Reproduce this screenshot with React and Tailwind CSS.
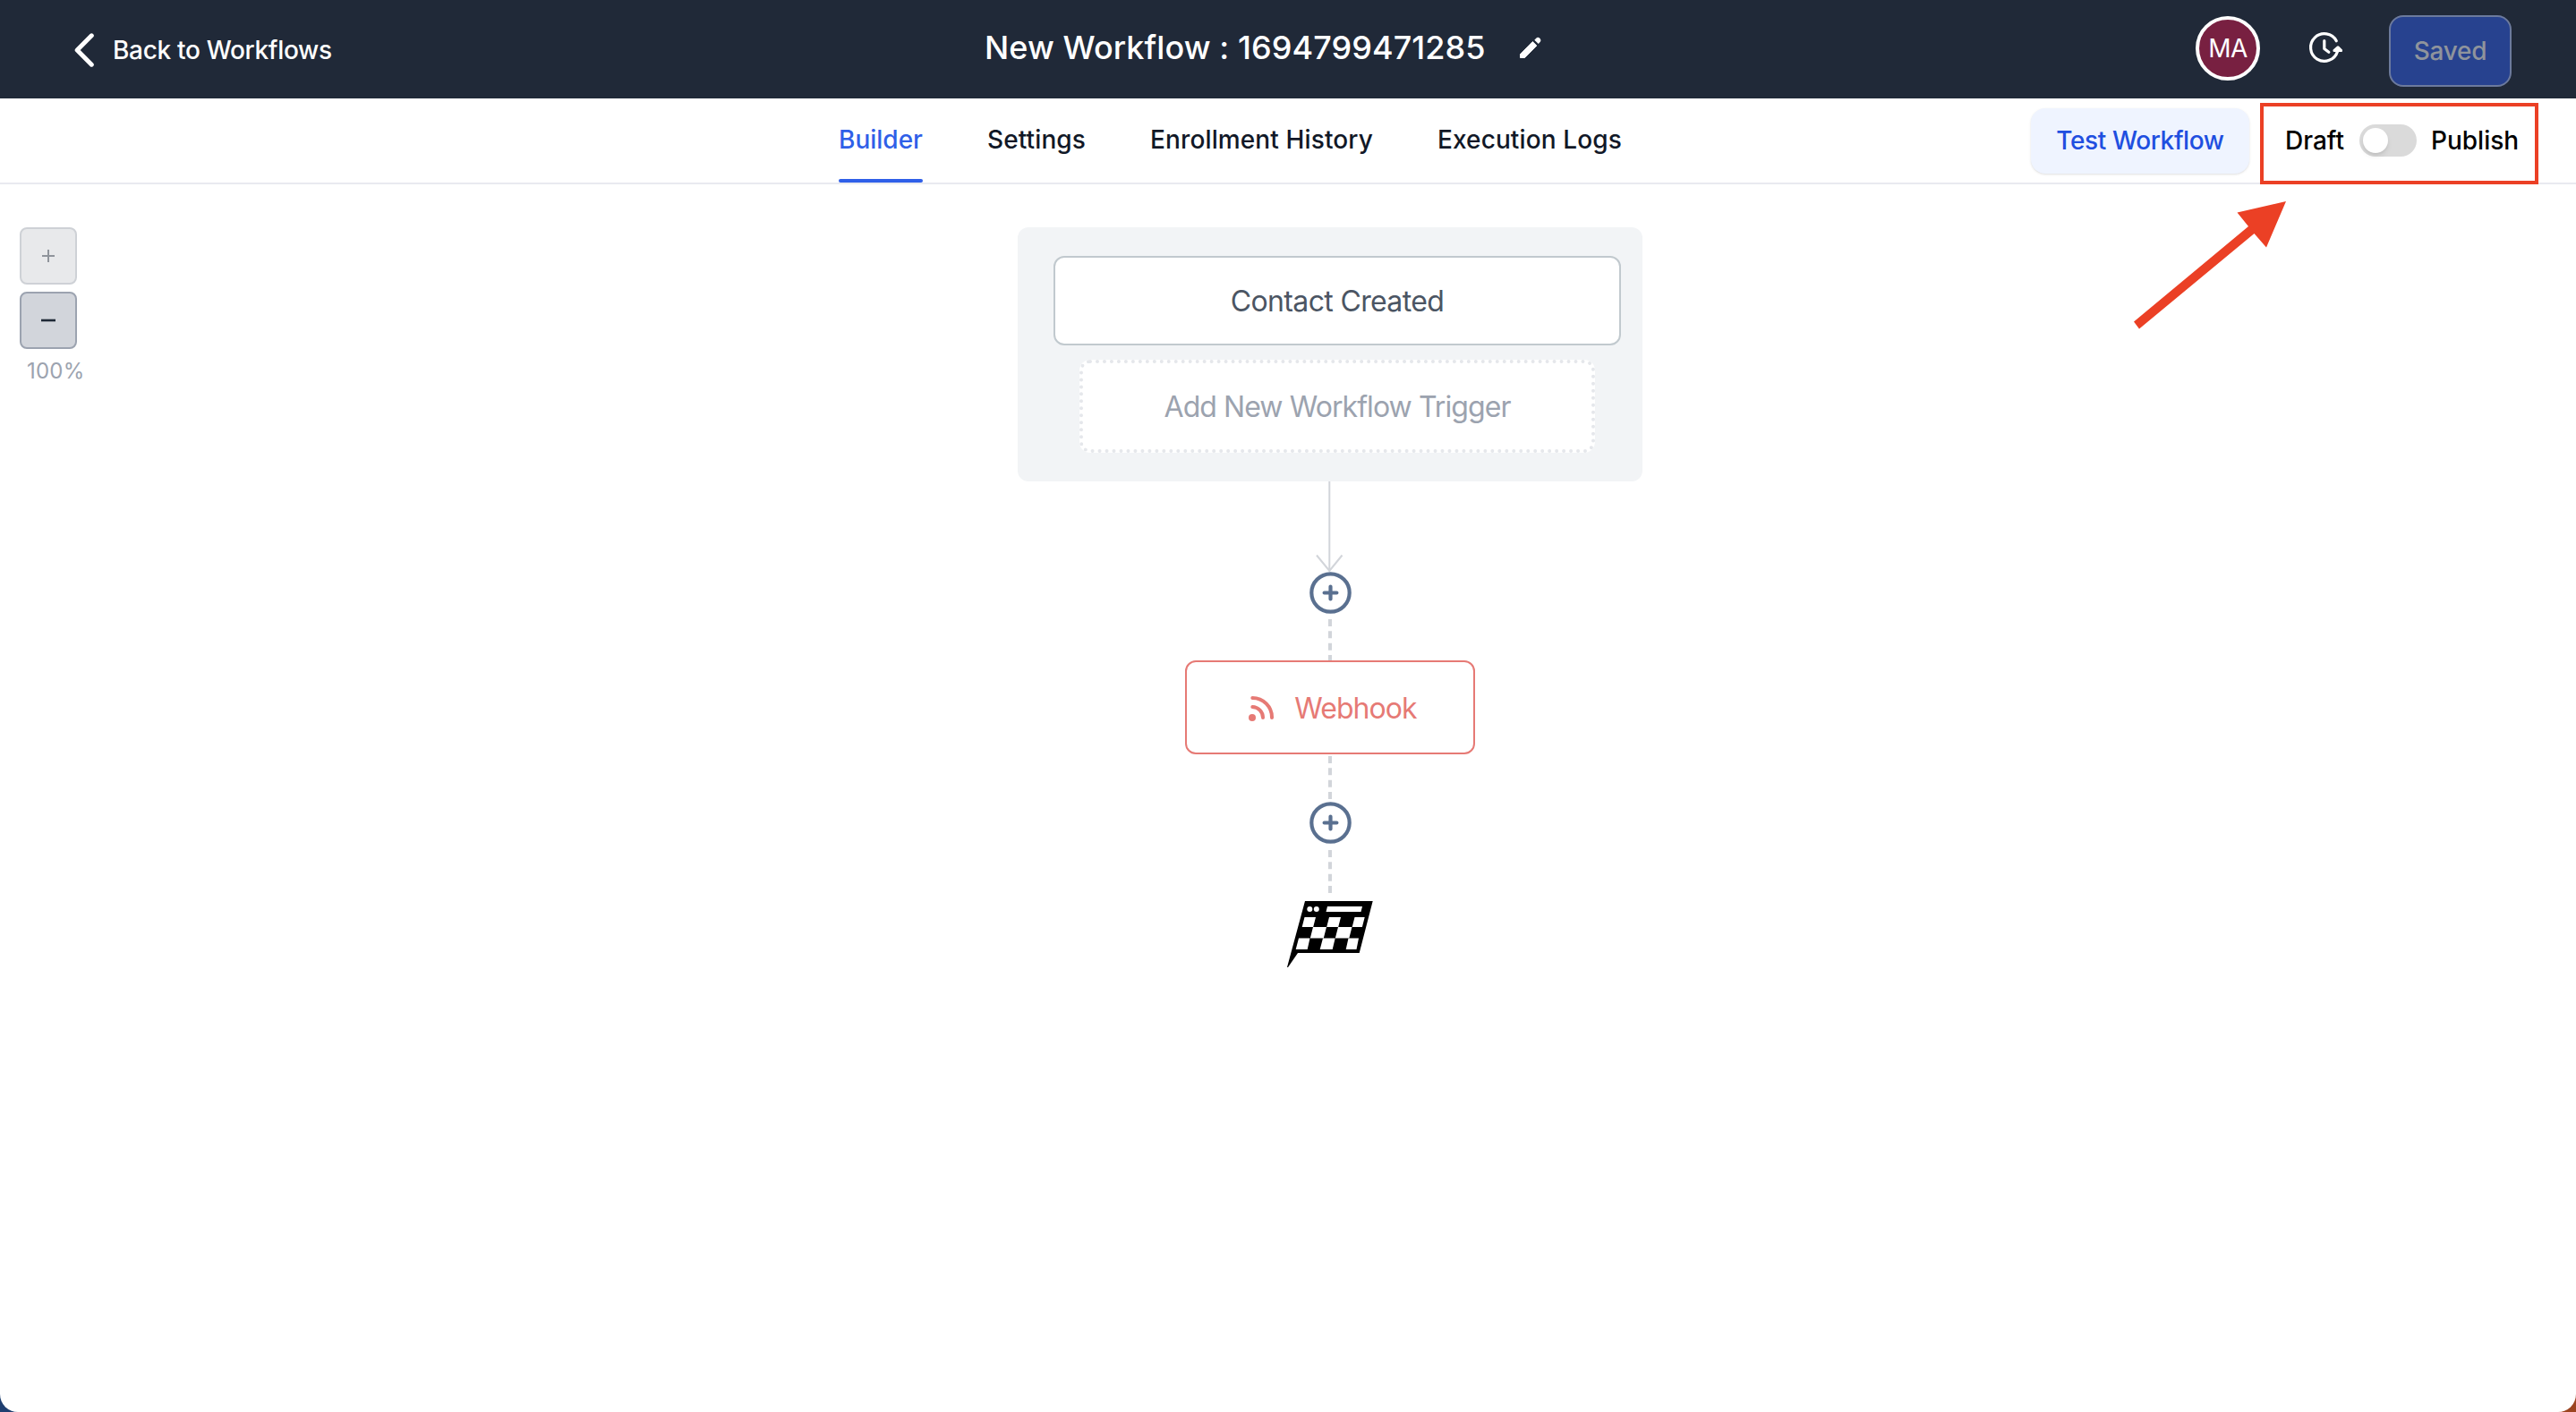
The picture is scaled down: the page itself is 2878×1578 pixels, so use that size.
const TABS = ["Settings", "Enrollment History", "Execution Logs"];

function ChevronLeft() {
  return (
    <svg className="h-[38px] w-[22px] shrink-0" viewBox="0 0 22 38" fill="none" stroke="#fff" strokeWidth="5" strokeLinecap="round" strokeLinejoin="round">
      <path d="M19.3 2.8 3.2 19l16.1 16.2" />
    </svg>
  );
}

function Pencil() {
  return (
    <svg className="h-8 w-8 shrink-0" viewBox="0 0 32 32" fill="#fff">
      <path d="M4.500 23.500L18.300 9.600L22.800 14L9.500 27.500H4.500z" strokeLinejoin="round" stroke="#fff" strokeWidth="1" />
      <path d="M20.300 7.700L22.500 5.500C23.500 4.500 25 4.600 26 5.600C27.500 7.100 27.900 8.500 26.800 9.700L24.800 11.900z" />
    </svg>
  );
}

function ClockForward() {
  return (
    <svg className="h-[38px] w-[38px] shrink-0" viewBox="0 0 38 38" fill="none" stroke="#fff" strokeWidth="3.2" strokeLinecap="round" strokeLinejoin="round">
      <path d="M31.300 10.700A15.300 15.300 0 1 0 32.500 22.500" />
      <path d="M17.800 10.500v9l5 3.700" />
      <path d="M29 21.500l4-3.500 3.500 3.500z" fill="#fff" />
    </svg>
  );
}

function AddNode() {
  return (
    <svg className="block h-[47px] w-[47px]" viewBox="0 0 47 47" fill="none" stroke="#5a7090" strokeWidth="4.2" strokeLinecap="round">
      <circle cx="23.5" cy="23.5" r="21.2" />
      <path d="M16.6 23.5h13.8M23.5 16.6v13.8" />
    </svg>
  );
}

function Dashes({ h }) {
  return (
    <svg className="block w-1" height={h} viewBox={`0 0 4 ${h}`}>
      <path d={`M2 0V${h}`} stroke="#d2d5da" strokeWidth="4" strokeDasharray="8 5.35" />
    </svg>
  );
}

function DownArrow() {
  return (
    <svg className="block h-[101px] w-8" viewBox="0 0 32 101" fill="none" stroke="#d2d5da" strokeWidth="2">
      <path d="M15.3 0v100M1 82.500l14.300 17.500L29.500 82.500" />
    </svg>
  );
}

function WebhookIcon() {
  return (
    <svg className="h-7 w-7 shrink-0" viewBox="0 0 28 28" fill="none" stroke="#e67a75" strokeWidth="4" strokeLinecap="round">
      <circle cx="4" cy="24" r="4" fill="#e67a75" stroke="none" />
      <path d="M4.300 2A21.700 21.700 0 0 1 26 24M4.300 12A12 12 0 0 1 16 24" />
    </svg>
  );
}

function FinishFlag() {
  return (
    <svg className="block h-[75px] w-24" viewBox="0 0 96 75">
      <path d="M20 0H95.700L80.700 58H12L1 74H0z" fill="#000" />
      <g fill="#fff">
        <circle cx="25.300" cy="9" r="3" />
        <circle cx="32.800" cy="9" r="3" />
        <path d="M45 6h39l-1.500 6H43.500z" />
        <path d="M19.500 18H32l-2.800 11H16.700zM47 18h13l-2.800 11H44.200zM75.500 18h11.200l-2.800 11H72.700z" />
        <path d="M29 29h15l-3.200 12.500H25.800zM57 29h15.500l-3.200 12.500H53.800z" />
        <path d="M13 41.500h12.500L22.700 54H9.700zM40 41.500h13.700L50.700 54H36.700zM68.500 41.500H80L77.500 54H65.700z" />
      </g>
    </svg>
  );
}

export default function App() {
  return (
    <div className="h-[1578px] w-[2878px] bg-[linear-gradient(90deg,#1f3f70_50%,#9c4420_50%)] font-['Inter',sans-serif]">
      <div className="relative flex h-full flex-col overflow-hidden rounded-b-[20px] bg-white">
        <header className="grid h-[110px] shrink-0 grid-cols-[1100px_1fr_425px] items-center bg-[#202938] text-white">
          <div className="flex items-center gap-[21px] pt-0.5 pl-[83px]">
            <ChevronLeft />
            <span className="text-[28px] leading-9 font-[550] tracking-[-0.32px]">Back to Workflows</span>
          </div>
          <div className="flex items-center gap-[34px] pb-1">
            <h1 className="text-[36px] leading-10 font-[530] tracking-[0.08px] whitespace-nowrap">New Workflow : 1694799471285</h1>
            <Pencil />
          </div>
          <div className="flex items-center">
            <div className="mb-0.5 flex size-[72px] items-center justify-center rounded-full border-4 border-white bg-[#782041] text-[28px] tracking-[-0.5px]">MA</div>
            <div className="mb-0.5 ml-[54px]"><ClockForward /></div>
            <button className="mt-1 ml-[52px] flex h-20 w-[137px] items-center justify-center rounded-2xl border-2 border-[#6c7a9d] bg-[#27428f] text-[28px] font-[550] tracking-[-0.3px] text-[#8f949c]">Saved</button>
          </div>
        </header>

        <nav className="flex h-24 shrink-0 border-b-2 border-[#e9eaf0] text-[28px] font-medium text-[#111827]">
          <div className="ml-[937px] flex w-[1332px] gap-[72px] font-[530]">
            <div className="flex h-[94px] flex-col justify-between text-[#2f5fe8]">
              <span className="mt-7 leading-9">Builder</span>
              <span className="h-1 rounded-full bg-[#2f5fe8]" />
            </div>
            {TABS.map((t) => (
              <span key={t} className="mt-7 leading-9 tracking-[0.12px] whitespace-nowrap">{t}</span>
            ))}
          </div>
          <button className="mt-[11px] h-[73px] w-[244px] shrink-0 rounded-2xl bg-[#eff4ff] pb-0.5 font-[550] tracking-[-0.4px] text-[#1f4fe0] shadow-sm">Test Workflow</button>
          <div className="mt-[5px] ml-3 flex h-[91px] w-[311px] shrink-0 items-center border-4 border-[#eb4025] pb-2 pl-6 text-black">
            <span>Draft</span>
            <span className="ml-[17px] flex h-9 w-16 items-center rounded-full bg-[#dadada] pl-1">
              <span className="size-7 rounded-full bg-white shadow-md" />
            </span>
            <span className="ml-4">Publish</span>
          </div>
        </nav>

        <main className="flex grow items-start pt-12">
          <div className="flex w-[1115px] flex-col gap-2 pl-[22px]">
            <button className="flex size-16 items-center justify-center rounded-lg border-2 border-[#ced1d6] bg-[#e8e9eb]">
              <svg className="h-3.5 w-3.5" viewBox="0 0 14 14" stroke="#8f949b" strokeWidth="2"><path d="M0 7h14M7 0v14" /></svg>
            </button>
            <button className="flex size-16 items-center justify-center rounded-lg border-2 border-[#9ca3b0] bg-[#d2d5db]">
              <svg className="h-1 w-4" viewBox="0 0 16 4" stroke="#1f2937" strokeWidth="2.600"><path d="M0 2h16" /></svg>
            </button>
            <span className="pt-px pl-2 text-[24px] leading-8 font-[430] tracking-[0.2px] text-[#9ca3af]">100%</span>
          </div>

          <div className="ml-[22px] flex w-[698px] flex-col items-center">
            <section className="flex h-[284px] w-[698px] flex-col items-center gap-4 rounded-xl bg-[#f2f4f6] pt-8 pl-4 text-[32px] font-[430]">
              <div className="flex h-[100px] w-[634px] items-center justify-center rounded-xl border-2 border-[#c1c9ce] bg-white pt-0.5 tracking-[-0.65px] text-[#4b5563]">Contact Created</div>
              <div className="flex h-[104px] w-[576px] items-center justify-center rounded-xl border-4 border-dotted border-[#e5e7eb] bg-white pt-0.5 tracking-[-0.93px] text-[#9ca3af]">Add New Workflow Trigger</div>
            </section>
            <DownArrow />
            <AddNode />
            <div className="mt-1.5"><Dashes h={46} /></div>
            <div className="flex h-[105px] w-[324px] items-center justify-center gap-[23px] rounded-xl border-2 border-[#e67a75] bg-white pt-0.5 pl-1.5 text-[32px] font-[430] tracking-[-0.95px] text-[#e67a75]">
              <WebhookIcon />
              <span>Webhook</span>
            </div>
            <div className="mt-0.5"><Dashes h={48} /></div>
            <div className="mt-[3px]"><AddNode /></div>
            <div className="mt-[7px]"><Dashes h={48} /></div>
            <div className="mt-[9px]"><FinishFlag /></div>
          </div>
        </main>

        <svg className="absolute top-[224px] left-[2383px] h-[146px] w-[174px]" viewBox="2383 224 174 146">
          <path d="M2554 225L2532 276.500L2518.500 261L2390 367.500L2384 359.500L2512 253L2499.500 237.500z" fill="#eb4025" />
        </svg>
      </div>
    </div>
  );
}
